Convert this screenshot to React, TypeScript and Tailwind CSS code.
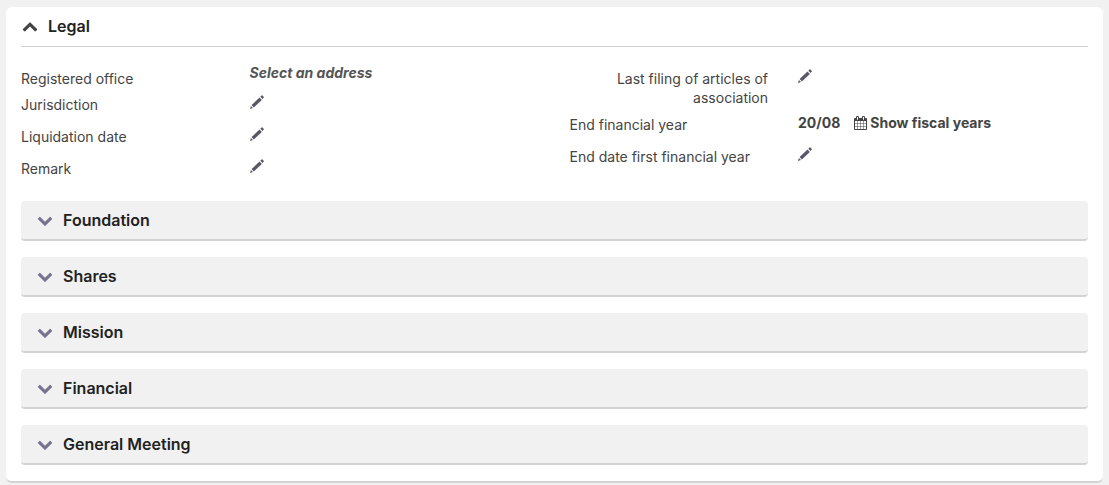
import { useState, type ReactNode } from 'react';
import clsx from 'clsx';

const sections = ['Foundation', 'Shares', 'Mission', 'Financial', 'General Meeting'];

function ChevronIcon({ up, className }: { up?: boolean; className?: string }) {
  return (
    <svg viewBox="0 0 1792 1792" fill="currentColor" aria-hidden="true" className={clsx('w-4 h-4 shrink-0', className)}>
      {up ? (
        <path d="M1683 1331l-166 165q-19 19-45 19t-45-19l-531-531-531 531q-19 19-45 19t-45-19l-166-165q-19-19-19-45.5t19-45.5l742-741q19-19 45-19t45 19l742 741q19 19 19 45.5t-19 45.5z" />
      ) : (
        <path d="M1683 808l-742 741q-19 19-45 19t-45-19l-742-741q-19-19-19-45.5t19-45.5l166-165q19-19 45-19t45 19l531 531 531-531q19-19 45-19t45 19l166 165q19 19 19 45.5t-19 45.5z" />
      )}
    </svg>
  );
}

function PencilIcon() {
  return (
    <svg viewBox="0 0 14 14" fill="currentColor" aria-hidden="true" className="w-[14px] h-[14px]">
      <path d="M0 14l.9-3L3 13.1z" />
      <path d="M1.6 10.1l7.9-7.5 2.3 2.3-7.9 7.5z" />
      <path d="M10.3 1.8L11.5.6q.5-.5 1 0l1.1 1.1q.5.5 0 1l-1.1 1.3z" />
    </svg>
  );
}

function CalendarIcon() {
  return (
    <svg viewBox="64 0 1664 1792" fill="currentColor" aria-hidden="true" className="w-[13px] h-[14px]">
      <path d="M192 1664h288v-288h-288v288zm352 0h320v-288h-320v288zm-352-352h288v-320h-288v320zm352 0h320v-320h-320v320zm-352-384h288v-288h-288v288zm736 736h320v-288h-320v288zm-384-736h320v-288h-320v288zm768 736h288v-288h-288v288zm-384-352h320v-320h-320v320zm-352-864v-288q0-13-9.5-22.5t-22.5-9.5h-64q-13 0-22.5 9.5t-9.5 22.5v288q0 13 9.5 22.5t22.5 9.5h64q13 0 22.5-9.5t9.5-22.5zm736 864h288v-320h-288v320zm-384-384h320v-288h-320v288zm384 0h288v-288h-288v288zm32-480v-288q0-13-9.5-22.5t-22.5-9.5h-64q-13 0-22.5 9.5t-9.5 22.5v288q0 13 9.5 22.5t22.5 9.5h64q13 0 22.5-9.5t9.5-22.5zm384-64v1280q0 52-38 90t-90 38h-1408q-52 0-90-38t-38-90v-1280q0-52 38-90t90-38h128v-96q0-66 47-113t113-47h64q66 0 113 47t47 113v96h384v-96q0-66 47-113t113-47h64q66 0 113 47t47 113v96h128q52 0 90 38t38 90z" />
    </svg>
  );
}

function EditButton({ label }: { label: string }) {
  return (
    <button type="button" aria-label={`Edit ${label}`} className="block mt-[6px] text-[#565868]">
      <PencilIcon />
    </button>
  );
}

interface FieldProps {
  label: string;
  className?: string;
  alignRight?: boolean;
  children?: ReactNode;
}

function Field({ label, className, alignRight, children }: FieldProps) {
  return (
    <div className={clsx('grid grid-cols-12', className)}>
      <dt className={clsx('col-span-5 px-[15px] pt-[6px]', alignRight && 'text-right')}>{label}</dt>
      <dd className="col-span-7 px-[15px]">{children ?? <EditButton label={label} />}</dd>
    </div>
  );
}

function Section({ title }: { title: string }) {
  const [open, setOpen] = useState(false);

  return (
    <button
      type="button"
      aria-expanded={open}
      onClick={() => setOpen(!open)}
      className="flex items-center gap-[10px] w-full h-10 px-4 rounded bg-[#f1f1f1] border-b-2 border-[#d3d3d3] text-base font-semibold text-[#222]"
    >
      <ChevronIcon up={open} className="text-[#77748f]" />
      {title}
    </button>
  );
}

export default function App() {
  const [open, setOpen] = useState(true);

  return (
    <div className="min-h-screen bg-[#f1f1f1] px-[6px] pt-[7px] pb-[2px] font-['Inter','Liberation_Sans',sans-serif] text-sm leading-[19px] text-[#444]">
      <div className="bg-white rounded-md border-b-2 border-[#d3d3d3] px-[15px] pb-4">
        <h2 className="border-b border-[#d0d0d0]">
          <button
            type="button"
            aria-expanded={open}
            onClick={() => setOpen(!open)}
            className="flex items-center gap-[10px] w-full h-[39px] pl-px pb-0.5 text-base font-semibold text-[#222]"
          >
            <ChevronIcon up={open} className="text-[#444]" />
            Legal
          </button>
        </h2>

        {open && (
          <>
            <div className="grid grid-cols-2 -mx-[15px] pt-4 pb-4">
              <dl>
                <Field label="Registered office" className="h-[26px]">
                  <button type="button" className="block font-bold italic text-[#555]">
                    Select an address
                  </button>
                </Field>
                <Field label="Jurisdiction" className="min-h-8" />
                <Field label="Liquidation date" className="min-h-8" />
                <Field label="Remark" className="min-h-8" />
              </dl>
              <dl>
                <Field label="Last filing of articles of association" alignRight className="min-h-[46px]" />
                <Field label="End financial year" className="min-h-8">
                  <div className="flex items-center gap-[14px] pt-1 font-bold">
                    <span>20/08</span>
                    <button type="button" className="flex items-center gap-[3px]">
                      <CalendarIcon />
                      Show fiscal years
                    </button>
                  </div>
                </Field>
                <Field label="End date first financial year" className="min-h-8" />
              </dl>
            </div>

            <div className="flex flex-col gap-4">
              {sections.map((title) => (
                <Section key={title} title={title} />
              ))}
            </div>
          </>
        )}
      </div>
    </div>
  );
}
